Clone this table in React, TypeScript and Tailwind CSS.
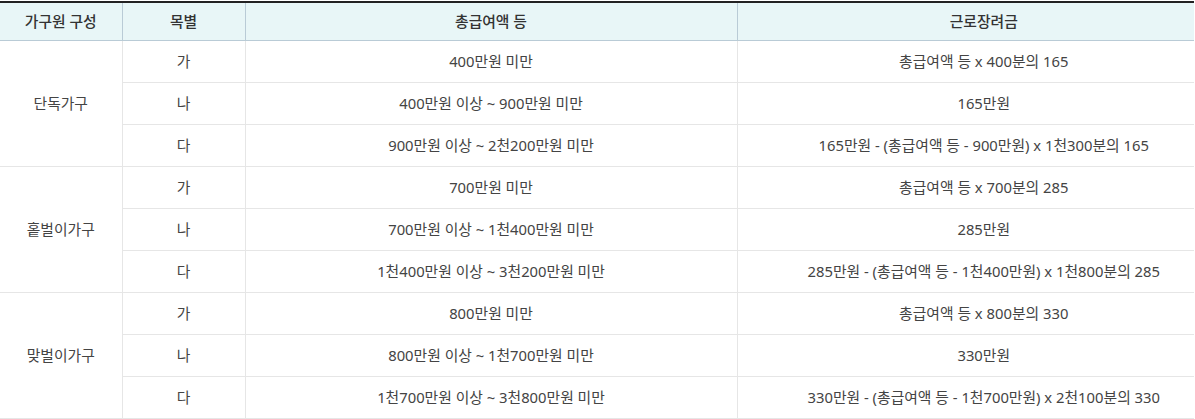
import React from "react"

interface Row {
  grade: string
  range: string
  amount: string
}

interface Group {
  name: string
  rows: Row[]
}

const groups: Group[] = [
  {
    name: "단독가구",
    rows: [
      { grade: "가", range: "400만원 미만", amount: "총급여액 등 x 400분의 165" },
      { grade: "나", range: "400만원 이상 ~ 900만원 미만", amount: "165만원" },
      { grade: "다", range: "900만원 이상 ~ 2천200만원 미만", amount: "165만원 - (총급여액 등 - 900만원) x 1천300분의 165" },
    ],
  },
  {
    name: "홑벌이가구",
    rows: [
      { grade: "가", range: "700만원 미만", amount: "총급여액 등 x 700분의 285" },
      { grade: "나", range: "700만원 이상 ~ 1천400만원 미만", amount: "285만원" },
      { grade: "다", range: "1천400만원 이상 ~ 3천200만원 미만", amount: "285만원 - (총급여액 등 - 1천400만원) x 1천800분의 285" },
    ],
  },
  {
    name: "맞벌이가구",
    rows: [
      { grade: "가", range: "800만원 미만", amount: "총급여액 등 x 800분의 330" },
      { grade: "나", range: "800만원 이상 ~ 1천700만원 미만", amount: "330만원" },
      { grade: "다", range: "1천700만원 이상 ~ 3천800만원 미만", amount: "330만원 - (총급여액 등 - 1천700만원) x 2천100분의 330" },
    ],
  },
]

export default function App() {
  return (
    <div
      className="bg-white pt-px w-[1195px] h-[419px] overflow-hidden"
      style={{ fontFamily: '"Noto Sans", "Noto Sans CJK KR", sans-serif' }}
    >
      <table className="w-[1194px] table-fixed border-collapse text-[14.8px] text-[#444]">
        <colgroup>
          <col className="w-[122px]" />
          <col className="w-[123px]" />
          <col className="w-[492px]" />
          <col />
        </colgroup>
        <thead>
          {/* header row with dark top line */}
          <tr className="h-[38px] bg-[#e8f6f7] border-t-2 border-t-[#222] border-b border-b-[#b9cbd6] text-[#333]">
            <th className="font-medium">가구원 구성</th>
            <th className="font-medium border-l border-[#b9cbd6]">목별</th>
            <th className="font-medium border-l border-[#b9cbd6]">총급여액 등</th>
            <th className="font-medium border-l border-[#b9cbd6] pl-[36px]">근로장려금</th>
          </tr>
        </thead>
        <tbody>
          {groups.map((group) =>
            group.rows.map((row, i) => (
              <tr key={group.name + row.grade} className="h-[42px] border-b border-[#e6e6e6] text-center">
                {i === 0 && (
                  <td rowSpan={group.rows.length} className="align-middle">
                    {group.name}
                  </td>
                )}
                <td className="border-l border-[#e6e6e6]">{row.grade}</td>
                <td className="border-l border-[#e6e6e6]">{row.range}</td>
                <td className="border-l border-[#e6e6e6] pl-[36px]">{row.amount}</td>
              </tr>
            )),
          )}
        </tbody>
      </table>
    </div>
  )
}
